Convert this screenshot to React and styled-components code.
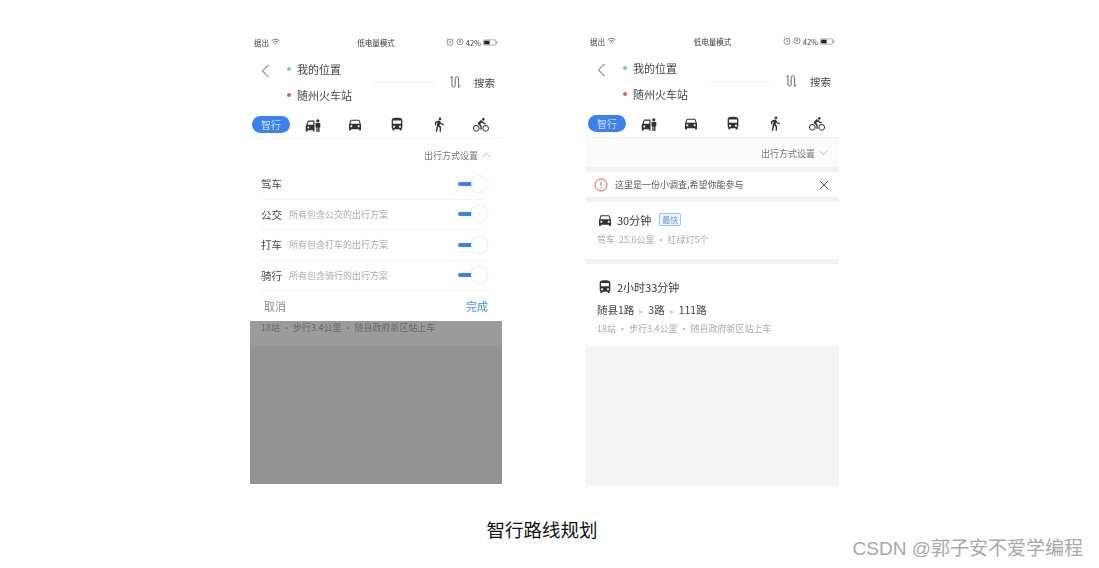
import React from 'react'
import styled, { createGlobalStyle } from 'styled-components'
import { MdDirectionsCar, MdDirectionsBus, MdDirectionsWalk, MdDirectionsBike } from 'react-icons/md'

const GlobalStyle = createGlobalStyle`
    html, body {
        margin: 0;
        padding: 0;
        background: #fff;
        overflow: hidden;
    }
    body {
        font-family: "Noto Sans CJK SC", "Liberation Sans", sans-serif;
        color: #333;
    }
`

function CarPerson() {
    return (
        <svg width="16" height="16" viewBox="0 0 16 16" fill="#333">
            <path d="M1.300 8 2.600 4.400C2.800 3.900 3.200 3.600 3.800 3.600H9.500V14.500H8V13.300H2.800V14.500H1.200C.9 14.500.7 14.300.7 14V9.200C.7 8.700 1 8.300 1.300 8ZM2.700 7.800H8.300V4.800H4C3.800 4.800 3.600 4.900 3.500 5.100Z" />
            <circle cx="3.300" cy="10.500" r="1" fill="#fff" />
            <circle cx="12.800" cy="3.800" r="1.600" />
            <path d="M10.500 6h4.800v4.600h-.8V15h-1.300v-4.400h-.6V15h-1.300v-4.400h-.8Z" />
        </svg>
    )
}

function Wifi() {
    return (
        <svg width="9" height="8" viewBox="0 0 9 8" fill="none" stroke="#555" strokeWidth=".8">
            <path d="M.5 3a5.500 5.500 0 0 1 8 0M2 4.600a3.300 3.300 0 0 1 5 0M3.400 6a1.400 1.400 0 0 1 2.200 0" />
        </svg>
    )
}

function Clock() {
    return (
        <svg width="8" height="8" viewBox="0 0 8 8" fill="none" stroke="#666" strokeWidth=".7">
            <circle cx="4" cy="4.300" r="3" />
            <path d="M4 2.600V4.500H5.300M.8 1.500 2 .6M7.200 1.500 6 .6" />
        </svg>
    )
}

function Pin() {
    return (
        <svg width="8" height="8" viewBox="0 0 8 8" fill="none" stroke="#666" strokeWidth=".7">
            <circle cx="4" cy="3.800" r="3" />
            <circle cx="4" cy="3.500" r=".9" />
        </svg>
    )
}

function Battery() {
    return (
        <svg width="15" height="7" viewBox="0 0 15 7">
            <rect x=".4" y=".9" width="12.400" height="5.200" rx="1" fill="none" stroke="#777" strokeWidth=".6" />
            <rect x="1.200" y="1.700" width="5.400" height="3.600" fill="#222" />
            <rect x="13.300" y="2.600" width="1" height="1.800" fill="#777" />
        </svg>
    )
}

function Back() {
    return (
        <svg width="9" height="14" viewBox="0 0 9 14" fill="none" stroke="#555" strokeWidth="1">
            <path d="M7.500 1 1.500 7l6 6" />
        </svg>
    )
}

function Swap() {
    return (
        <svg width="12" height="14" viewBox="0 0 12 14" fill="none" stroke="#666" strokeWidth="1">
            <path d="M.4 3 2 1.300V10.500a1.600 1.600 0 0 0 3.200 0V3.500a1.700 1.700 0 0 1 3.400 0V12.500L10.300 11" />
        </svg>
    )
}

function Chevron({ up }) {
    return (
        <svg width="9" height="6" viewBox="0 0 9 6" fill="none" stroke="#aaa" strokeWidth=".8">
            <path d={up ? 'M.8 5 4.500 1.300 8.200 5' : 'M.8 1 4.500 4.700 8.200 1'} />
        </svg>
    )
}

function Warn() {
    return (
        <svg width="14" height="14" viewBox="0 0 14 14" fill="none" stroke="#e0625a" strokeWidth="1">
            <circle cx="7" cy="7" r="6" />
            <path d="M7 3.600v4.200M7 9.300v1.100" />
        </svg>
    )
}

function Close() {
    return (
        <svg width="10" height="10" viewBox="0 0 10 10" fill="none" stroke="#555" strokeWidth="1">
            <path d="M.8.8l8.400 8.400M9.200.8.800 9.200" />
        </svg>
    )
}

function TopBars() {
    return (
        <>
            <Status>
                <StatusSide>据出 <Wifi /></StatusSide>
                <StatusMid>低电量模式</StatusMid>
                <StatusSide $right><Clock /><Pin />42%<Battery /></StatusSide>
            </Status>
            <Header>
                <BackCell><Back /></BackCell>
                <Locations>
                    <LocRow><Dot $color="#6fcfae" />我的位置</LocRow>
                    <Divider />
                    <LocRow><Dot $color="#e0605a" />随州火车站</LocRow>
                </Locations>
                <SwapCell><Swap /></SwapCell>
                <SearchText>搜索</SearchText>
            </Header>
            <Tabs>
                <Pill>智行</Pill>
                <TabIcon><CarPerson /></TabIcon>
                <TabIcon><MdDirectionsCar size={17} /></TabIcon>
                <TabIcon><MdDirectionsBus size={17} /></TabIcon>
                <TabIcon><MdDirectionsWalk size={17} /></TabIcon>
                <TabIcon><MdDirectionsBike size={16} /></TabIcon>
            </Tabs>
        </>
    )
}

const options = [
    { name: '驾车', hint: '' },
    { name: '公交', hint: '所有包含公交的出行方案' },
    { name: '打车', hint: '所有包含打车的出行方案' },
    { name: '骑行', hint: '所有包含骑行的出行方案' },
]

export default function App() {
    return (
        <Page>
            <GlobalStyle />
            <Phones>
                <Phone $width={252} $top={34} $height={450}>
                    <TopBars />
                    <Settings $open>出行方式设置 <Chevron up /></Settings>
                    <Options>
                        {options.map((o) => (
                            <OptionRow key={o.name}>
                                <OptionName>{o.name}</OptionName>
                                <Hint>{o.hint}</Hint>
                                <Toggle><ToggleBar /><Knob /></Toggle>
                            </OptionRow>
                        ))}
                    </Options>
                    <Footer>
                        <Cancel>取消</Cancel>
                        <Done>完成</Done>
                    </Footer>
                    <Dim>
                        <DimBand>18站 · 步行3.4公里 · 随县政府新区站上车</DimBand>
                    </Dim>
                </Phone>
                <Phone $width={253} $top={33} $height={453}>
                    <TopBars />
                    <Settings>出行方式设置 <Chevron /></Settings>
                    <Notice>
                        <Warn />
                        <NoticeText>这里是一份小调查,希望你能参与</NoticeText>
                        <Close />
                    </Notice>
                    <RouteCard $height={62} $top={9}>
                        <RouteTitle>
                            <MdDirectionsCar size={16} />
                            <span>30分钟</span>
                            <Badge>最快</Badge>
                        </RouteTitle>
                        <RouteSub $gap={5}>驾车&nbsp; 25.6公里 · 红绿灯5个</RouteSub>
                    </RouteCard>
                    <RouteCard $height={82} $top={14} $last>
                        <RouteTitle>
                            <MdDirectionsBus size={16} />
                            <span>2小时33分钟</span>
                        </RouteTitle>
                        <Lines>随县1路<Arrow>▸</Arrow>3路<Arrow>▸</Arrow>111路</Lines>
                        <RouteSub $gap={4}>18站 · 步行3.4公里 · 随县政府新区站上车</RouteSub>
                    </RouteCard>
                    <Rest />
                </Phone>
            </Phones>
            <Caption>智行路线规划</Caption>
            <Watermark>CSDN @郭子安不爱学编程</Watermark>
        </Page>
    )
}

const Page = styled.div`
    position: relative;
    width: 1099px;
    height: 568px;
    padding-left: 250px;
    box-sizing: border-box;
    overflow: hidden;
`

const Phones = styled.div`
    display: flex;
    align-items: flex-start;
    gap: 84px;
    height: 486px;
`

const Phone = styled.div`
    width: ${(p) => p.$width}px;
    height: ${(p) => p.$height}px;
    margin-top: ${(p) => p.$top}px;
    display: flex;
    flex-direction: column;
    background: #fff;
    filter: blur(0.4px);
`

const Status = styled.div`
    height: 16px;
    flex: none;
    padding: 0 4px;
    display: grid;
    grid-template-columns: 1fr auto 1fr;
    align-items: center;
    font-size: 7.5px;
    color: #444;
`

const StatusSide = styled.div`
    display: flex;
    align-items: center;
    gap: 2px;
    justify-content: ${(p) => (p.$right ? 'flex-end' : 'flex-start')};
`

const StatusMid = styled.div`
    color: #333;
`

const Header = styled.div`
    height: 62px;
    flex: none;
    box-sizing: border-box;
    padding-top: 6px;
    display: flex;
    align-items: flex-start;
`

const BackCell = styled.div`
    width: 37px;
    padding: 3px 0 0 11px;
    box-sizing: border-box;
    flex: none;
`

const Locations = styled.div`
    width: 150px;
    flex: none;
`

const LocRow = styled.div`
    height: 25.5px;
    display: flex;
    align-items: center;
    font-size: 11px;
    color: #444;
`

const Dot = styled.span`
    width: 4px;
    height: 4px;
    margin-right: 6px;
    border-radius: 50%;
    background: ${(p) => p.$color};
`

const Divider = styled.div`
    height: 1px;
    margin-left: 84px;
    background: #f1f1f1;
`

const SwapCell = styled.div`
    width: 37px;
    padding: 19px 0 0 13px;
    box-sizing: border-box;
    flex: none;
    line-height: 0;
`

const SearchText = styled.div`
    font-size: 10.5px;
    color: #444;
    padding-top: 19px;
    line-height: 16px;
`

const Tabs = styled.div`
    height: 27px;
    flex: none;
    padding: 4px 0 0 2px;
    box-sizing: border-box;
    display: flex;
    align-items: flex-start;
    gap: 26px;
    border-bottom: 1px solid #f3f3f3;
`

const Pill = styled.div`
    width: 38px;
    height: 17px;
    margin-right: -11px;
    border-radius: 9px;
    background: #3a80ee;
    color: #d8e6fb;
    font-size: 10px;
    line-height: 17px;
    text-align: center;
`

const TabIcon = styled.div`
    width: 16px;
    height: 17px;
    display: flex;
    align-items: center;
    justify-content: center;
    color: #333;
`

const Settings = styled.div`
    height: 29px;
    flex: none;
    box-sizing: border-box;
    padding: ${(p) => (p.$open ? '3px' : '1px')} 11px 0 0;
    display: flex;
    align-items: center;
    justify-content: flex-end;
    gap: 4px;
    font-size: 9px;
    color: #777;
    background: ${(p) => (p.$open ? '#fff' : '#fbfbfb')};
`

const Options = styled.div`
    padding: 1px 15px 0 11px;
    display: flex;
    flex-direction: column;
`

const OptionRow = styled.div`
    height: 30.5px;
    box-sizing: border-box;
    display: flex;
    align-items: center;
    border-bottom: 1px solid #f4f4f4;
`

const OptionName = styled.div`
    width: 28px;
    font-size: 10.5px;
    color: #444;
`

const Hint = styled.div`
    flex: 1;
    font-size: 9px;
    color: #aaa;
`

const Toggle = styled.div`
    position: relative;
    width: 29px;
    height: 16px;
    display: flex;
    align-items: center;
`

const ToggleBar = styled.div`
    width: 15px;
    height: 4px;
    border-radius: 2px;
    background: #3a80ee;
`

const Knob = styled.div`
    position: absolute;
    right: 0;
    top: 0;
    width: 16px;
    height: 16px;
    border-radius: 50%;
    background: #fff;
    box-shadow: 0 0 3px rgba(0, 0, 0, 0.16);
`

const Footer = styled.div`
    height: 30px;
    flex: none;
    padding: 0 14px;
    display: flex;
    align-items: center;
    justify-content: space-between;
    font-size: 11px;
`

const Cancel = styled.div`
    color: #888;
`

const Done = styled.div`
    color: #4a8fe0;
`

const Dim = styled.div`
    flex: 1;
    background: #939393;
`

const DimBand = styled.div`
    height: 25px;
    padding: 0 11px;
    background: #9b9b9b;
    font-size: 9px;
    line-height: 14px;
    color: #666;
`

const Notice = styled.div`
    height: 25px;
    flex: none;
    border-top: 5px solid #f2f2f2;
    border-bottom: 5px solid #f2f2f2;
    box-sizing: content-box;
    padding: 0 10px 0 8px;
    display: flex;
    align-items: center;
    font-size: 9px;
    color: #555;
`

const NoticeText = styled.div`
    flex: 1;
    margin-left: 7px;
`

const RouteCard = styled.div`
    height: ${(p) => p.$height}px;
    flex: none;
    box-sizing: border-box;
    padding: ${(p) => p.$top}px 10px 0 11px;
    border-bottom: ${(p) => (p.$last ? '0' : '5px solid #f2f2f2')};
`

const RouteTitle = styled.div`
    display: flex;
    align-items: center;
    gap: 4px;
    height: 17px;
    font-size: 11px;
    color: #333;
`

const Badge = styled.span`
    margin-left: 4px;
    padding: 0 2px;
    border: 1px solid #9cc2ee;
    border-radius: 2px;
    background: #eef5fd;
    color: #5a97dd;
    font-size: 8px;
    line-height: 11px;
`

const RouteSub = styled.div`
    margin-top: ${(p) => p.$gap}px;
    font-size: 9px;
    color: #aaa;
    line-height: 14px;
`

const Lines = styled.div`
    margin-top: 7px;
    font-size: 10.5px;
    line-height: 15px;
    color: #444;
`

const Arrow = styled.span`
    margin: 0 5px;
    color: #ccc;
    font-size: 8px;
`

const Rest = styled.div`
    flex: 1;
    background: #f3f3f3;
`

const Caption = styled.div`
    width: 584px;
    margin-top: 31px;
    text-align: center;
    font-size: 18.5px;
    line-height: 24px;
    color: #111;
`

const Watermark = styled.div`
    position: absolute;
    right: 16px;
    top: 537px;
    font-family: "Liberation Sans", "Noto Sans CJK SC", sans-serif;
    font-size: 19px;
    line-height: 24px;
    color: #a8a8a8;
    white-space: nowrap;
`
